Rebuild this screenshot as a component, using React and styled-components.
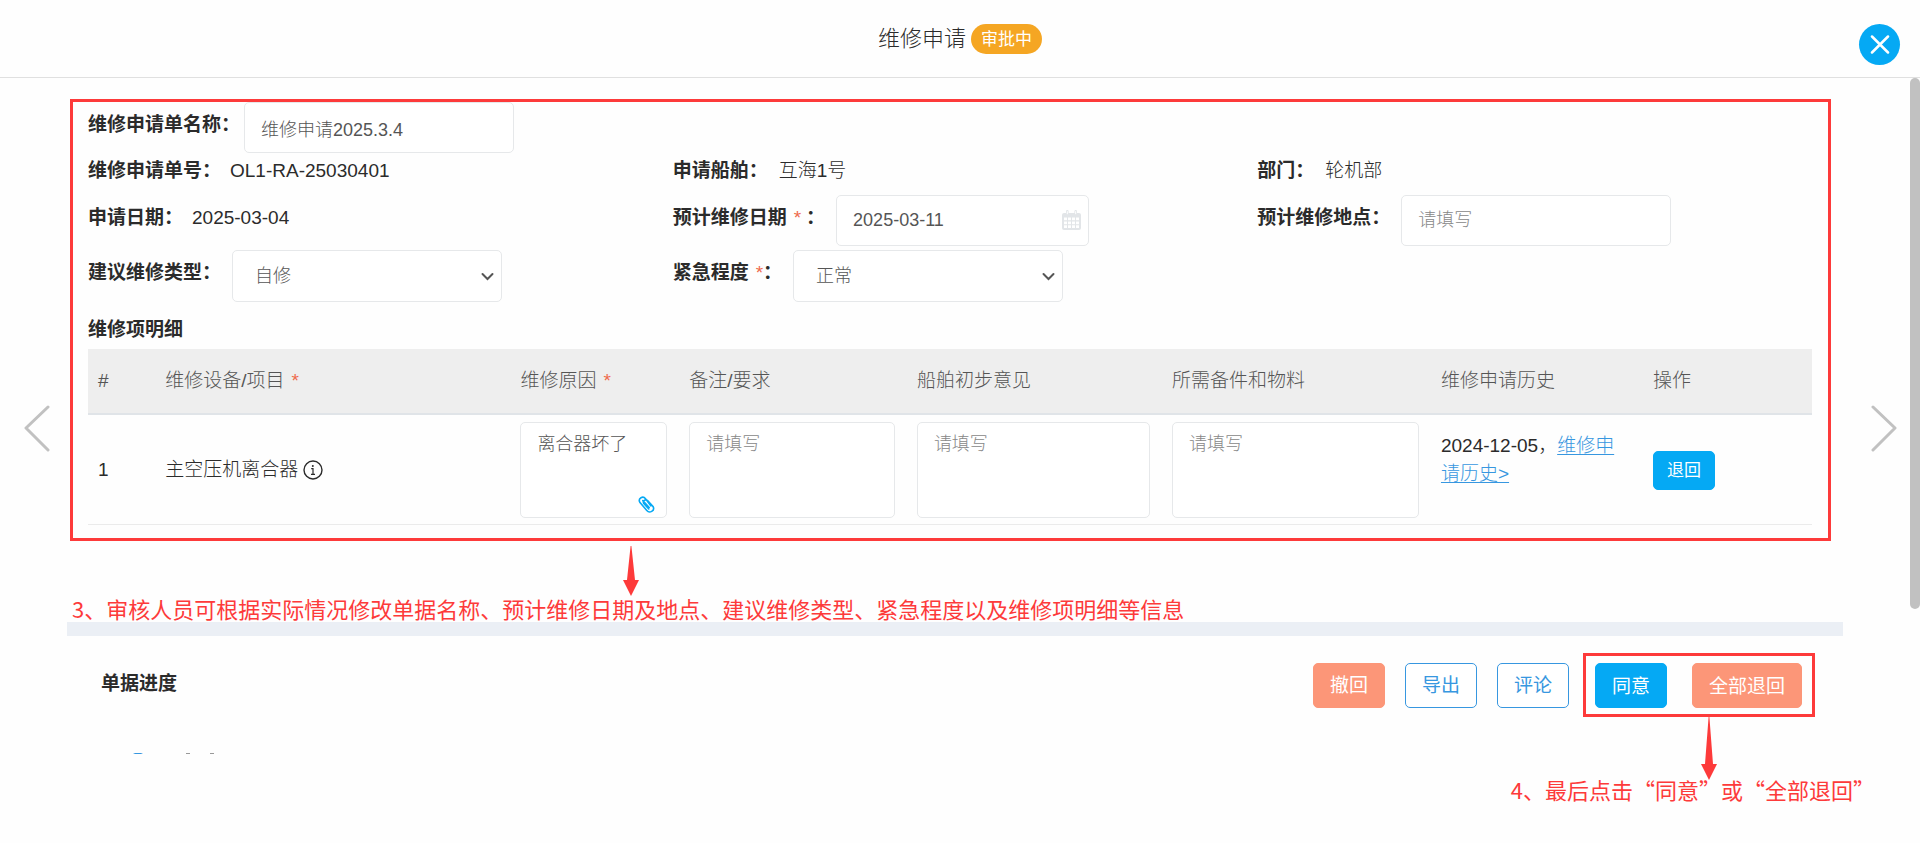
import React from "react";
import styled, { createGlobalStyle, css } from "styled-components";

const BLUE = "#05a9f4";
const LINK = "#3797e0";
const RED = "#fd3a3a";
const CORAL = "#fc9678";
const LINE = "#e6e8ea";

const GlobalStyle = createGlobalStyle`
  *, *::before, *::after { box-sizing: border-box; }
  body {
    margin: 0;
    background: #fefefe;
    color: #2b2b2b;
    font-family: "Liberation Sans", "Noto Sans CJK SC", sans-serif;
    font-size: 19px;
    font-weight: 300;
    line-height: 28px;
  }
  button, input, select, textarea { font: inherit; color: inherit; }
  button { cursor: pointer; }
`;

const Page = styled.div`
  min-height: 100vh;
  position: relative;
`;

const Header = styled.header`
  height: 78px;
  border-bottom: 1px solid #e0e0e0;
  display: flex;
  justify-content: center;
  align-items: center;
  gap: 5px;
  position: relative;
`;

const Title = styled.h1`
  margin: 0;
  font-size: 22px;
  font-weight: 300;
`;

const Badge = styled.span`
  height: 30px;
  padding: 0 10px;
  border-radius: 15px;
  background: #f5a623;
  color: #fff;
  font-size: 17px;
  font-weight: 400;
  line-height: 31px;
`;

const CloseButton = styled.button`
  position: absolute;
  right: 20px;
  top: 24px;
  width: 41px;
  height: 41px;
  padding: 0;
  border: 0;
  border-radius: 50%;
  background: ${BLUE};
  display: grid;
  place-items: center;
`;

const Body = styled.div`
  display: flex;
  align-items: flex-start;
  position: relative;
`;

const PageTurn = styled.button`
  flex: 0 0 ${(p) => p.$space}px;
  margin-top: 326px;
  padding: 0 0 0 ${(p) => p.$inset || 0}px;
  border: 0;
  background: none;
  display: flex;
  justify-content: center;
`;

const ScrollThumb = styled.div`
  position: absolute;
  right: 0;
  top: 0;
  width: 10px;
  height: 531px;
  border-radius: 5px;
  background: #c1c1c1;
`;

const Content = styled.main`
  flex: 1;
  min-width: 0;
`;

const FormPanel = styled.section`
  margin: 21px 12px 0 3px;
  padding: 0 16px 13px 15px;
  border: 3px solid ${RED};
`;

const FieldGrid = styled.div`
  display: grid;
  grid-template-columns: repeat(3, 1fr);
  margin-right: -30px;
`;

const Field = styled.div`
  grid-column: ${(p) => p.$column || "auto"};
  display: flex;
  align-items: flex-start;
  gap: ${(p) => p.$gap || 11}px;
  height: ${(p) => (p.$plain ? 42 : 51)}px;
  margin-top: ${(p) => (p.$spaced ? 4 : 0)}px;
  > label, > span { padding-top: ${(p) => (p.$plain ? 4 : 9)}px; white-space: nowrap; }
`;

const Label = styled.label`
  font-weight: 700;
`;

const Star = styled.span`
  color: #ee6a4c;
  font-weight: 400;
  margin-left: 7px;
  margin-right: ${(p) => p.$after || 0}px;
`;

const control = css`
  border: 1px solid ${LINE};
  border-radius: 5px;
  background: #fff;
  color: #555;
  font-size: 18px;
  &::placeholder { color: #888; opacity: 1; }
`;

const TextInput = styled.input`
  ${control}
  display: block;
  width: ${(p) => p.$width || 270}px;
  height: 51px;
  padding: 0 16px;
`;

const InputWrap = styled.div`
  position: relative;
  svg { position: absolute; right: 8px; top: 15px; }
`;

const SelectWrap = styled.div`
  position: relative;
  svg { position: absolute; right: 8px; top: 22px; pointer-events: none; }
`;

const Select = styled.select`
  ${control}
  display: block;
  appearance: none;
  width: 270px;
  height: 52px;
  padding: 0 22px;
`;

const SectionTitle = styled.h2`
  margin: 0;
  height: 48px;
  padding-top: 15px;
  font-size: 19px;
  font-weight: 700;
`;

const Table = styled.table`
  width: 100%;
  table-layout: fixed;
  border-collapse: separate;
  border-spacing: 0;
`;

const Th = styled.th`
  height: 66px;
  padding: 0 12px 0 10px;
  background: #eee;
  border-bottom: 2px solid #e0e4e8;
  color: #555;
  font-weight: 300;
  text-align: left;
  white-space: nowrap;
`;

const Td = styled.td`
  padding: 7px 12px 6px 10px;
  border-bottom: 1px solid #ebebeb;
  vertical-align: middle;
`;

const Item = styled.div`
  display: flex;
  align-items: center;
  gap: 5px;
`;

const NoteBox = styled.div`
  position: relative;
  svg { position: absolute; right: 12px; bottom: 5px; }
`;

const TextArea = styled.textarea`
  ${control}
  display: block;
  width: 100%;
  height: 96px;
  padding: 7px 16px;
  resize: none;
`;

const History = styled.div`
  padding-bottom: 21px;
  a { color: ${LINK}; text-underline-offset: 2px; }
`;

const tones = {
  solid: css`background: ${BLUE}; border-color: ${BLUE}; color: #fff;`,
  coral: css`background: ${CORAL}; border-color: ${CORAL}; color: #fff;`,
  outline: css`background: #fff; border-color: ${LINK}; color: ${LINK};`,
};

const Button = styled.button`
  height: ${(p) => (p.$small ? 39 : 45)}px;
  padding: 2px ${(p) => (p.$small ? 13 : 16)}px 0;
  border: 1px solid;
  border-radius: 5px;
  font-size: ${(p) => (p.$small ? 17 : 19)}px;
  font-weight: 400;
  white-space: nowrap;
  ${(p) => tones[p.$tone]}
`;

const Note = styled.p`
  margin: 0;
  color: ${RED};
  font-family: "Noto Sans CJK SC", sans-serif;
  font-size: 22px;
  line-height: 22px;
  font-weight: 400;
  white-space: nowrap;
`;

const FormCallout = styled.div`
  height: 81px;
  padding: 5px 0 0 5px;
  svg { display: block; margin: 0 0 1px 551px; }
`;

const Band = styled.div`
  height: 14px;
  background: #ebeff5;
`;

const Progress = styled.section`
  padding: 17px 28px 0 34px;
`;

const ProgressBar = styled.div`
  display: flex;
  align-items: center;
  justify-content: space-between;
`;

const ProgressTitle = styled.h2`
  margin: 0;
  padding-bottom: 3px;
  font-size: 19px;
  font-weight: 700;
`;

const Actions = styled.div`
  display: flex;
  align-items: center;
  gap: 20px;
`;

const Highlight = styled.div`
  position: relative;
  display: flex;
  gap: 25px;
  margin-left: -6px;
  padding: 7px 10px 6px 9px;
  border: 3px solid ${RED};
`;

const ActionCallout = styled.div`
  position: absolute;
  top: calc(100% + 3px);
  right: -63px;
  svg { display: block; margin: 0 0 -2px 190px; }
`;

const Steps = styled.div`
  margin-top: 36px;
  padding-left: 32px;
  height: 1px;
  overflow: hidden;
  svg { display: block; }
`;

const Arrow = ({ height }) => (
  <svg width="16" height={height} viewBox={`0 0 16 ${height}`} fill={RED} aria-hidden="true">
    <path d={`M7.6 0h.8L12 ${height - 16}h4L8 ${height}L0 ${height - 16}h4z`} />
  </svg>
);

const TurnIcon = ({ next }) => (
  <svg width="28" height="48" viewBox="0 0 28 48" fill="none" stroke="#c1c1c1" strokeWidth="3" strokeLinecap="round" strokeLinejoin="round">
    <path d={next ? "M3 3L25 24L3 46" : "M25 3L3 24L25 46"} />
  </svg>
);

const Chevron = () => (
  <svg width="13" height="9" viewBox="0 0 13 9" fill="none" stroke="#555" strokeWidth="2" strokeLinecap="round">
    <path d="M1.5 2L6.5 7L11.5 2" />
  </svg>
);

const CalendarIcon = () => (
  <svg width="19" height="20" viewBox="0 0 19 20" aria-hidden="true">
    <path fill="#e2e5e8" fillRule="evenodd" d="M2 3h2V1.200q0-1.200 1.300-1.200T6.600 1.200V3h5.800V1.200q0-1.200 1.300-1.200T15 1.200V3h2q2 0 2 2v13q0 2-2 2H2q-2 0-2-2V5q0-2 2-2zM2 7.500v2.800h3V7.500zM6 7.500v2.800h3V7.500zM10 7.500v2.800h3V7.500zM14 7.500v2.800h3V7.500zM2 11.400v2.800h3v-2.800zM6 11.400v2.800h3v-2.800zM10 11.400v2.800h3v-2.800zM14 11.400v2.800h3v-2.800zM2 15.300V18h3v-2.700zM6 15.300V18h3v-2.700zM10 15.300V18h3v-2.700zM14 15.300V18h3v-2.700z" />
    <path stroke="#fff" strokeWidth="1" d="M5.300 1.200v3M13.700 1.200v3" />
  </svg>
);

const InfoIcon = () => (
  <svg width="20" height="20" viewBox="0 0 20 20" fill="none" stroke="#2b2b2b" aria-hidden="true">
    <circle cx="10" cy="10" r="9" strokeWidth="1.400" />
    <circle cx="9.800" cy="5.900" r="1" fill="#2b2b2b" stroke="none" />
    <path strokeWidth="1.200" d="M8.200 8.700H10V14.300M8 14.400h4" />
  </svg>
);

const ClipIcon = () => (
  <svg width="17" height="17" viewBox="0 0 17 17" fill="none" stroke={BLUE} strokeWidth="1.600" strokeLinecap="round" aria-hidden="true">
    <path d="M11.200 11.500L4.800 4.600M12.800 9.800L7.500 2.800C5-.6-.2 2.200 1.800 6.200L8.800 14.500C11.500 17.800 17 14.800 15.200 10.800L9.600 4.600C7.500 2.800 4.300 4.800 5.800 7.600L10.800 13" />
  </svg>
);

const columns = [
  ["#", 3.9], ["维修设备/项目", 20.6, true], ["维修原因", 9.8, true], ["备注/要求", 13.2],
  ["船舶初步意见", 14.8], ["所需备件和物料", 15.6], ["维修申请历史", 12.3], ["操作", 9.8],
];

export default function App() {
  return (
    <Page lang="zh-CN">
      <GlobalStyle />
      <Header>
        <Title>维修申请</Title>
        <Badge>审批中</Badge>
        <CloseButton aria-label="关闭">
          <svg width="20" height="20" viewBox="0 0 20 20" stroke="#fff" strokeWidth="2.500" strokeLinecap="round">
            <path d="M2 1.500L18 17.500M18 1.500L2 17.500" />
          </svg>
        </CloseButton>
      </Header>
      <Body>
        <PageTurn $space={67} $inset={6} aria-label="上一条"><TurnIcon /></PageTurn>
        <Content>
          <FormPanel>
            <FieldGrid>
              <Field $column="1 / -1" $gap={4}>
                <Label htmlFor="name">维修申请单名称：</Label>
                <TextInput id="name" defaultValue="维修申请2025.3.4" />
              </Field>
              <Field $plain $gap={9}><Label as="span">维修申请单号：</Label><span>OL1-RA-25030401</span></Field>
              <Field $plain><Label as="span">申请船舶：</Label><span>互海1号</span></Field>
              <Field $plain><Label as="span">部门：</Label><span>轮机部</span></Field>
              <Field $gap={9}><Label as="span">申请日期：</Label><span>2025-03-04</span></Field>
              <Field>
                <Label htmlFor="date">预计维修日期<Star $after={5}>*</Star>：</Label>
                <InputWrap>
                  <TextInput id="date" $width={253} defaultValue="2025-03-11" />
                  <CalendarIcon />
                </InputWrap>
              </Field>
              <Field>
                <Label htmlFor="place">预计维修地点：</Label>
                <TextInput id="place" placeholder="请填写" />
              </Field>
              <Field $spaced>
                <Label htmlFor="type">建议维修类型：</Label>
                <SelectWrap>
                  <Select id="type"><option>自修</option></Select>
                  <Chevron />
                </SelectWrap>
              </Field>
              <Field $spaced>
                <Label htmlFor="urgency">紧急程度<Star>*</Star>：</Label>
                <SelectWrap>
                  <Select id="urgency"><option>正常</option></Select>
                  <Chevron />
                </SelectWrap>
              </Field>
            </FieldGrid>
            <SectionTitle>维修项明细</SectionTitle>
            <Table>
              <colgroup>
                {columns.map(([name, width]) => <col key={name} style={{ width: `${width}%` }} />)}
              </colgroup>
              <thead>
                <tr>
                  {columns.map(([name, , required]) => (
                    <Th key={name} scope="col">{name}{required && <Star>*</Star>}</Th>
                  ))}
                </tr>
              </thead>
              <tbody>
                <tr>
                  <Td>1</Td>
                  <Td><Item>主空压机离合器<InfoIcon /></Item></Td>
                  <Td>
                    <NoteBox>
                      <TextArea aria-label="维修原因" defaultValue="离合器坏了" />
                      <ClipIcon />
                    </NoteBox>
                  </Td>
                  <Td><TextArea aria-label="备注/要求" placeholder="请填写" /></Td>
                  <Td><TextArea aria-label="船舶初步意见" placeholder="请填写" /></Td>
                  <Td><TextArea aria-label="所需备件和物料" placeholder="请填写" /></Td>
                  <Td><History>2024-12-05，<a href="#history">维修申请历史&gt;</a></History></Td>
                  <Td><Button $tone="solid" $small>退回</Button></Td>
                </tr>
              </tbody>
            </Table>
          </FormPanel>
          <FormCallout>
            <Arrow height={50} />
            <Note>3、审核人员可根据实际情况修改单据名称、预计维修日期及地点、建议维修类型、紧急程度以及维修项明细等信息</Note>
          </FormCallout>
          <Band />
          <Progress>
            <ProgressBar>
              <ProgressTitle>单据进度</ProgressTitle>
              <Actions>
                <Button $tone="coral">撤回</Button>
                <Button $tone="outline">导出</Button>
                <Button $tone="outline">评论</Button>
                <Highlight>
                  <Button $tone="solid">同意</Button>
                  <Button $tone="coral">全部退回</Button>
                  <ActionCallout>
                    <Arrow height={63} />
                    <Note>4、最后点击“同意”或“全部退回”</Note>
                  </ActionCallout>
                </Highlight>
              </Actions>
            </ProgressBar>
            <Steps>
              <svg width="84" height="1" viewBox="0 0 84 1" aria-hidden="true">
                <path fill={LINK} d="M0 1L2 0h6l2 1z" />
                <path fill="#999" d="M53 0h4v1h-4zM77 0h4v1h-4z" />
              </svg>
            </Steps>
          </Progress>
        </Content>
        <PageTurn $space={77} $inset={4} aria-label="下一条"><TurnIcon next /></PageTurn>
        <ScrollThumb />
      </Body>
    </Page>
  );
}
